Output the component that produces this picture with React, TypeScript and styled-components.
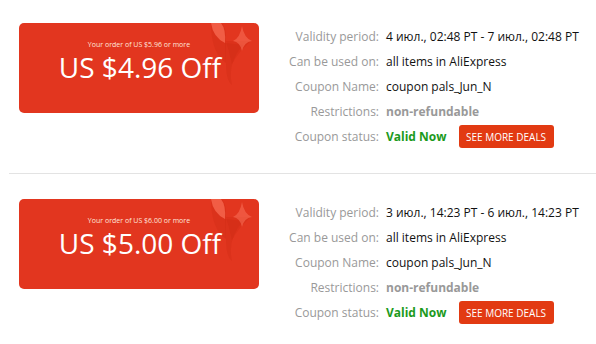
import React from "react";
import styled, { createGlobalStyle } from "styled-components";

const Global = createGlobalStyle`
  html, body { margin: 0; padding: 0; background: #fff; }
  body { font-family: "Open Sans", "Noto Sans", sans-serif; }
`;

const List = styled.div`
  width: 596px;
  display: flex;
  flex-direction: column;
`;

const Item = styled.div<{ $first?: boolean }>`
  display: flex;
  align-items: flex-start;
  gap: 21px;
  margin-left: 9px;
  padding: ${(p) => (p.$first ? "23px" : "25px")} 0 ${(p) => (p.$first ? "24px" : "20px")} 10px;
  border-bottom: ${(p) => (p.$first ? "1px solid #e3e3e3" : "none")};
`;

const Card = styled.div`
  position: relative;
  width: 240px;
  height: 90px;
  box-sizing: border-box;
  padding-top: 16px;
  border-radius: 5px;
  background: #e2361f;
  color: #fff;
  overflow: hidden;
  display: flex;
  flex-direction: column;
  align-items: center;
`;

const Deco = styled.svg`
  position: absolute;
  top: 0;
  right: 0;
`;

const Min = styled.div`
  position: relative;
  font-size: 7px;
  line-height: 11px;
  color: #ffe5dc;
`;

const Amount = styled.div`
  position: relative;
  font-size: 28px;
  line-height: 34px;
  margin-left: 2px;
`;

const Details = styled.div`
  display: grid;
  grid-template-columns: 99px auto;
  grid-auto-rows: 25px;
  column-gap: 7px;
  align-items: center;
  margin-top: 1px;
  font-size: 12px;
`;

const Label = styled.div`
  text-align: right;
  color: #999;
  white-space: nowrap;
`;

const Value = styled.div<{ $tone?: "muted" | "ok" }>`
  white-space: nowrap;
  color: ${(p) => (p.$tone === "muted" ? "#999" : p.$tone === "ok" ? "#1c9a1c" : "#111")};
  font-weight: ${(p) => (p.$tone ? 700 : 400)};
  display: flex;
  align-items: center;
`;

const Button = styled.button`
  margin-left: 12px;
  width: 95px;
  height: 23px;
  border: none;
  border-radius: 3px;
  background: #e23a12;
  color: #fff;
  font-family: inherit;
  font-size: 10px;
  padding: 0;
  text-transform: uppercase;
  cursor: pointer;
`;

const Decoration = () => (
  <Deco width="60" height="70" viewBox="0 0 60 70">
    <path d="M12 0 Q12 30 27 40 L27 12 Q26 2 22 0 Z" fill="#c4230c" opacity="0.22" />
    <path d="M12 0 H22 Q27 6 26 20 Q14 14 12 0 Z" fill="#ff7a62" opacity="0.6" />
    <path d="M26 20 L27 40 Q27 58 33 62 Q28 40 44 22 Z" fill="#c4230c" opacity="0.22" />
    <path d="M27 18 L52 18 Q40 28 33 41 Q30 28 27 18 Z" fill="#c4230c" opacity="0.18" />
    <path d="M43 3 Q45 15 53 18 Q45 19 43 28 Q41 19 34 18 Q41 15 43 3 Z" fill="#ff7f66" opacity="0.45" />
  </Deco>
);

type Coupon = {
  min: string;
  amount: string;
  period: string;
};

const coupons: Coupon[] = [
  { min: "US $5.96", amount: "US $4.96 Off", period: "4 июл., 02:48 PT - 7 июл., 02:48 PT" },
  { min: "US $6.00", amount: "US $5.00 Off", period: "3 июл., 14:23 PT - 6 июл., 14:23 PT" },
];

export default function App() {
  return (
    <>
      <Global />
      <List>
        {coupons.map((c, i) => (
          <Item key={i} $first={i === 0}>
            <Card>
              <Decoration />
              <Min>Your order of {c.min} or more</Min>
              <Amount>{c.amount}</Amount>
            </Card>
            <Details>
              <Label>Validity period:</Label>
              <Value>{c.period}</Value>
              <Label>Can be used on:</Label>
              <Value>all items in AliExpress</Value>
              <Label>Coupon Name:</Label>
              <Value>coupon pals_Jun_N</Value>
              <Label>Restrictions:</Label>
              <Value $tone="muted">non-refundable</Value>
              <Label>Coupon status:</Label>
              <Value>
                <Value as="span" $tone="ok">Valid Now</Value>
                <Button>See more deals</Button>
              </Value>
            </Details>
          </Item>
        ))}
      </List>
    </>
  );
}
